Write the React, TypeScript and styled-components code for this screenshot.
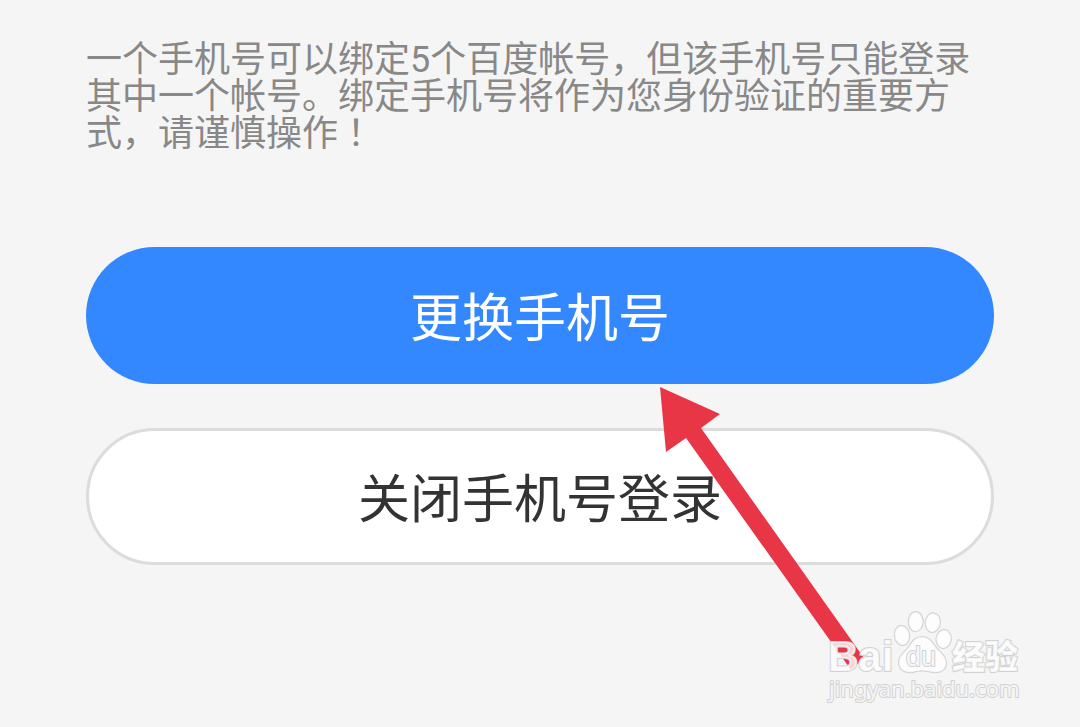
import React from "react";
import styled, { createGlobalStyle } from "styled-components";

const GlobalStyle = createGlobalStyle`
  *, *::before, *::after { box-sizing: border-box; }
  body {
    margin: 0;
    background: #f5f5f5;
    font-family: Roboto, "Noto Sans CJK SC", sans-serif;
  }
`;

const Page = styled.main`
  position: relative;
  min-height: 100vh;
  padding: 42px 86px 0;
  overflow: hidden;
`;

const Notice = styled.p`
  margin: 0 0 94px;
  color: #888;
  font-size: 36px;
  line-height: 37px;
`;

/* Exclamation mark centred in its full-width cell */
const CenteredMark = styled.span`
  font-family: Roboto, "Noto Sans CJK TC", sans-serif;
`;

const Actions = styled.div`
  position: relative;
  display: flex;
  flex-direction: column;
  gap: 44px;
`;

const PillButton = styled.button<{ $primary?: boolean }>`
  width: 100%;
  height: 137px;
  padding: 8px 0 0;
  border: ${(p) => (p.$primary ? "none" : "3px solid #dcdcdc")};
  border-radius: 69px;
  background: ${(p) => (p.$primary ? "#3388ff" : "#fff")};
  color: ${(p) => (p.$primary ? "#fff" : "#333")};
  font-family: inherit;
  font-size: 52px;
  line-height: 60px;
  cursor: pointer;
`;

const Pointer = styled.svg`
  position: absolute;
  top: 139px;
  left: 50%;
  margin-left: 118px;
  pointer-events: none;
`;

const Watermark = styled.svg`
  position: absolute;
  right: 58px;
  bottom: 23px;
  pointer-events: none;
`;

function ArrowPointer() {
  return (
    <Pointer width="210" height="290" viewBox="0 0 210 290" aria-hidden="true">
      <path d="M2 1 L62 28 L43 42 L206 272 L193 284 L28 52 L8 66 Z" fill="#e93647" />
    </Pointer>
  );
}

function BaiduWatermark() {
  return (
    <Watermark width="196" height="94" viewBox="0 0 196 94">
      <g
        fill="#fff"
        fillOpacity="0.8"
        stroke="#d2d2d2"
        strokeWidth="2"
        strokeLinejoin="round"
        paintOrder="stroke"
      >
        <ellipse cx="76" cy="25.5" rx="7.2" ry="9.6" transform="rotate(-8 76 25.5)" />
        <ellipse cx="89.7" cy="11.7" rx="7" ry="9.6" />
        <ellipse cx="106.7" cy="12.7" rx="7.2" ry="9.4" transform="rotate(8 106.7 12.7)" />
        <ellipse cx="117.7" cy="29" rx="7.2" ry="9" transform="rotate(8 117.7 29)" />
        <path d="M96 27 C104 27 107 34 111 39 C116 44 120 47 120 53 C120 60 114 63 107 62 C100 60 93 60 87 62 C79 63 73 60 73 52 C73 46 78 43 82 38 C86 33 88 27 96 27 Z" />
        <text x="2" y="61" fontFamily="'Liberation Sans', sans-serif" fontWeight="700" fontSize="42">
          Bai
        </text>
        <text x="80" y="56" fontFamily="'Liberation Sans', sans-serif" fontSize="27">
          du
        </text>
        <text x="126" y="59" fontFamily="'Noto Sans CJK SC', sans-serif" fontWeight="900" fontSize="33">
          经验
        </text>
        <text x="3" y="87" fontFamily="'Noto Sans', sans-serif" fontSize="22">
          jingyan.baidu.com
        </text>
      </g>
    </Watermark>
  );
}

export default function App() {
  return (
    <>
      <GlobalStyle />
      <Page>
        <Notice lang="zh-CN">
          一个手机号可以绑定5个百度帐号，但该手机号只能登录其中一个帐号。绑定手机号将作为您身份验证的重要方式，请谨慎操作
          <CenteredMark lang="zh-TW">！</CenteredMark>
        </Notice>
        <Actions>
          <PillButton type="button" $primary>
            更换手机号
          </PillButton>
          <PillButton type="button">关闭手机号登录</PillButton>
          <ArrowPointer />
        </Actions>
        <BaiduWatermark />
      </Page>
    </>
  );
}
